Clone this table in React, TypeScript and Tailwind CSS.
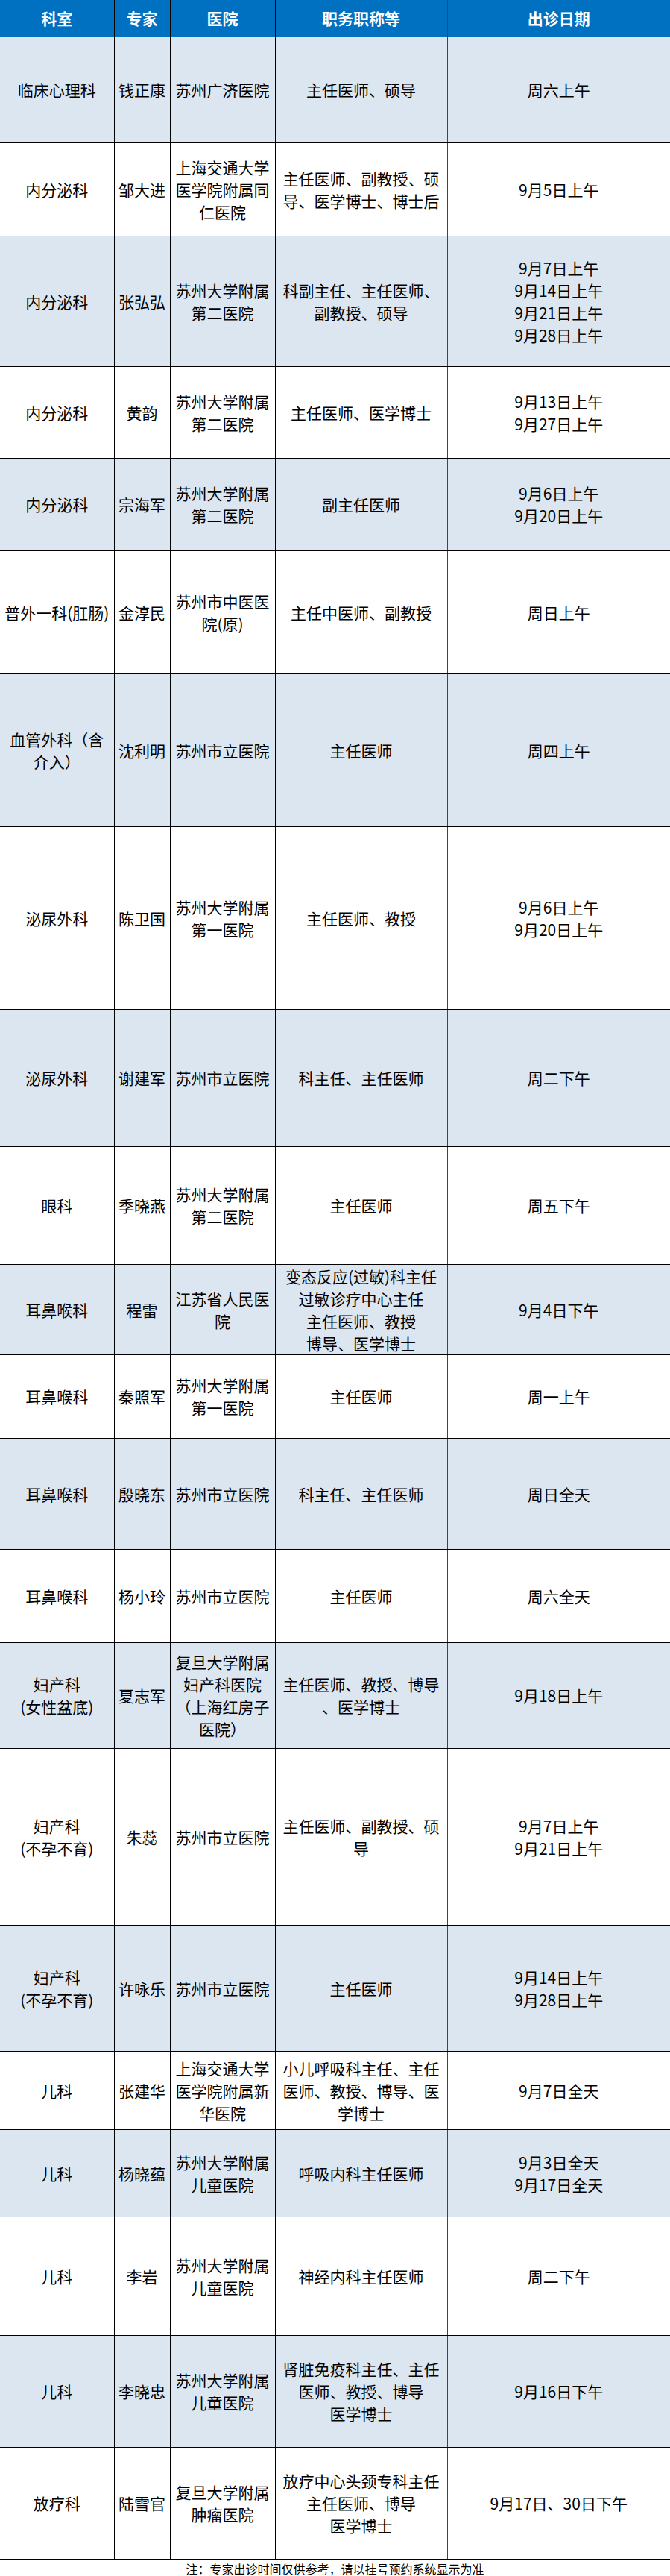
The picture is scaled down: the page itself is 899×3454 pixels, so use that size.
import React from "react";

type Row = {
  h: string;
  dept: string[];
  name: string[];
  hospital: string[];
  title: string[];
  date: string[];
};

// row heights are written out so Tailwind picks them up
const rows: Row[] = [
  { h: "h-[142px]", dept: ["临床心理科"], name: ["钱正康"], hospital: ["苏州广济医院"], title: ["主任医师、硕导"], date: ["周六上午"] },
  { h: "h-[125px]", dept: ["内分泌科"], name: ["邹大进"], hospital: ["上海交通大学", "医学院附属同", "仁医院"], title: ["主任医师、副教授、硕", "导、医学博士、博士后"], date: ["9月5日上午"] },
  { h: "h-[175px]", dept: ["内分泌科"], name: ["张弘弘"], hospital: ["苏州大学附属", "第二医院"], title: ["科副主任、主任医师、", "副教授、硕导"], date: ["9月7日上午", "9月14日上午", "9月21日上午", "9月28日上午"] },
  { h: "h-[123px]", dept: ["内分泌科"], name: ["黄韵"], hospital: ["苏州大学附属", "第二医院"], title: ["主任医师、医学博士"], date: ["9月13日上午", "9月27日上午"] },
  { h: "h-[124px]", dept: ["内分泌科"], name: ["宗海军"], hospital: ["苏州大学附属", "第二医院"], title: ["副主任医师"], date: ["9月6日上午", "9月20日上午"] },
  { h: "h-[165px]", dept: ["普外一科(肛肠)"], name: ["金淳民"], hospital: ["苏州市中医医", "院(原)"], title: ["主任中医师、副教授"], date: ["周日上午"] },
  { h: "h-[205px]", dept: ["血管外科（含", "介入）"], name: ["沈利明"], hospital: ["苏州市立医院"], title: ["主任医师"], date: ["周四上午"] },
  { h: "h-[245px]", dept: ["泌尿外科"], name: ["陈卫国"], hospital: ["苏州大学附属", "第一医院"], title: ["主任医师、教授"], date: ["9月6日上午", "9月20日上午"] },
  { h: "h-[184px]", dept: ["泌尿外科"], name: ["谢建军"], hospital: ["苏州市立医院"], title: ["科主任、主任医师"], date: ["周二下午"] },
  { h: "h-[158px]", dept: ["眼科"], name: ["季晓燕"], hospital: ["苏州大学附属", "第二医院"], title: ["主任医师"], date: ["周五下午"] },
  { h: "h-[120px]", dept: ["耳鼻喉科"], name: ["程雷"], hospital: ["江苏省人民医", "院"], title: ["变态反应(过敏)科主任", "过敏诊疗中心主任", "主任医师、教授", "博导、医学博士"], date: ["9月4日下午"] },
  { h: "h-[112px]", dept: ["耳鼻喉科"], name: ["秦照军"], hospital: ["苏州大学附属", "第一医院"], title: ["主任医师"], date: ["周一上午"] },
  { h: "h-[149px]", dept: ["耳鼻喉科"], name: ["殷晓东"], hospital: ["苏州市立医院"], title: ["科主任、主任医师"], date: ["周日全天"] },
  { h: "h-[125px]", dept: ["耳鼻喉科"], name: ["杨小玲"], hospital: ["苏州市立医院"], title: ["主任医师"], date: ["周六全天"] },
  { h: "h-[142px]", dept: ["妇产科", "(女性盆底)"], name: ["夏志军"], hospital: ["复旦大学附属", "妇产科医院", "（上海红房子", "医院）"], title: ["主任医师、教授、博导", "、医学博士"], date: ["9月18日上午"] },
  { h: "h-[237px]", dept: ["妇产科", "(不孕不育)"], name: ["朱蕊"], hospital: ["苏州市立医院"], title: ["主任医师、副教授、硕", "导"], date: ["9月7日上午", "9月21日上午"] },
  { h: "h-[169px]", dept: ["妇产科", "(不孕不育)"], name: ["许咏乐"], hospital: ["苏州市立医院"], title: ["主任医师"], date: ["9月14日上午", "9月28日上午"] },
  { h: "h-[105px]", dept: ["儿科"], name: ["张建华"], hospital: ["上海交通大学", "医学院附属新", "华医院"], title: ["小儿呼吸科主任、主任", "医师、教授、博导、医", "学博士"], date: ["9月7日全天"] },
  { h: "h-[117px]", dept: ["儿科"], name: ["杨晓蕴"], hospital: ["苏州大学附属", "儿童医院"], title: ["呼吸内科主任医师"], date: ["9月3日全天", "9月17日全天"] },
  { h: "h-[159px]", dept: ["儿科"], name: ["李岩"], hospital: ["苏州大学附属", "儿童医院"], title: ["神经内科主任医师"], date: ["周二下午"] },
  { h: "h-[150px]", dept: ["儿科"], name: ["李晓忠"], hospital: ["苏州大学附属", "儿童医院"], title: ["肾脏免疫科主任、主任", "医师、教授、博导", "医学博士"], date: ["9月16日下午"] },
  { h: "h-[150px]", dept: ["放疗科"], name: ["陆雪官"], hospital: ["复旦大学附属", "肿瘤医院"], title: ["放疗中心头颈专科主任", "主任医师、博导", "医学博士"], date: ["9月17日、30日下午"] },
];

const headers = ["科室", "专家", "医院", "职务职称等", "出诊日期"];

const Lines = ({ lines }: { lines: string[] }) => (
  <>
    {lines.map((l, i) => (
      <div key={i} className="whitespace-nowrap">
        {l}
      </div>
    ))}
  </>
);

const App = () => {
  return (
    <div
      className="w-[899px] bg-white text-black"
      style={{ fontFamily: '"Noto Sans CJK SC", "Noto Sans", sans-serif' }}
    >
      <table className="table-fixed border-collapse w-[899px]">
        <colgroup>
          <col className="w-[153px]" />
          <col className="w-[75px]" />
          <col className="w-[141px]" />
          <col className="w-[231px]" />
          <col className="w-[299px]" />
        </colgroup>
        <thead>
          <tr className="h-[49px] bg-[#0070c0]">
            {headers.map((h, i) => (
              <th
                key={i}
                className={`border-b border-black text-white text-[21px] font-bold text-center align-middle leading-[30px] ${
                  i > 0 ? (i === 4 ? "border-l border-l-[#444]" : "border-l border-l-black") : ""
                }`}
              >
                {h}
              </th>
            ))}
          </tr>
        </thead>
        <tbody>
          {rows.map((r, idx) => (
            <tr key={idx} className={`${r.h} ${idx % 2 === 0 ? "bg-[#dce6f1]" : "bg-white"}`}>
              <td className="border-b border-black text-[21px] leading-[30px] text-center align-middle px-0">
                <Lines lines={r.dept} />
              </td>
              <td className="border-b border-l border-black text-[21px] leading-[30px] text-center align-middle px-0">
                <Lines lines={r.name} />
              </td>
              <td className="border-b border-l border-black text-[21px] leading-[30px] text-center align-middle px-0">
                <Lines lines={r.hospital} />
              </td>
              <td className="border-b border-l border-black text-[21px] leading-[30px] text-center align-middle px-0">
                <Lines lines={r.title} />
              </td>
              <td className="border-b border-l border-b-black border-l-[#444] text-[21px] leading-[30px] text-center align-middle px-0">
                <Lines lines={r.date} />
              </td>
            </tr>
          ))}
        </tbody>
      </table>
      <div className="h-[24px] flex items-center justify-center text-[16px] leading-none text-black">
        注：专家出诊时间仅供参考，请以挂号预约系统显示为准
      </div>
    </div>
  );
};

export default App;
